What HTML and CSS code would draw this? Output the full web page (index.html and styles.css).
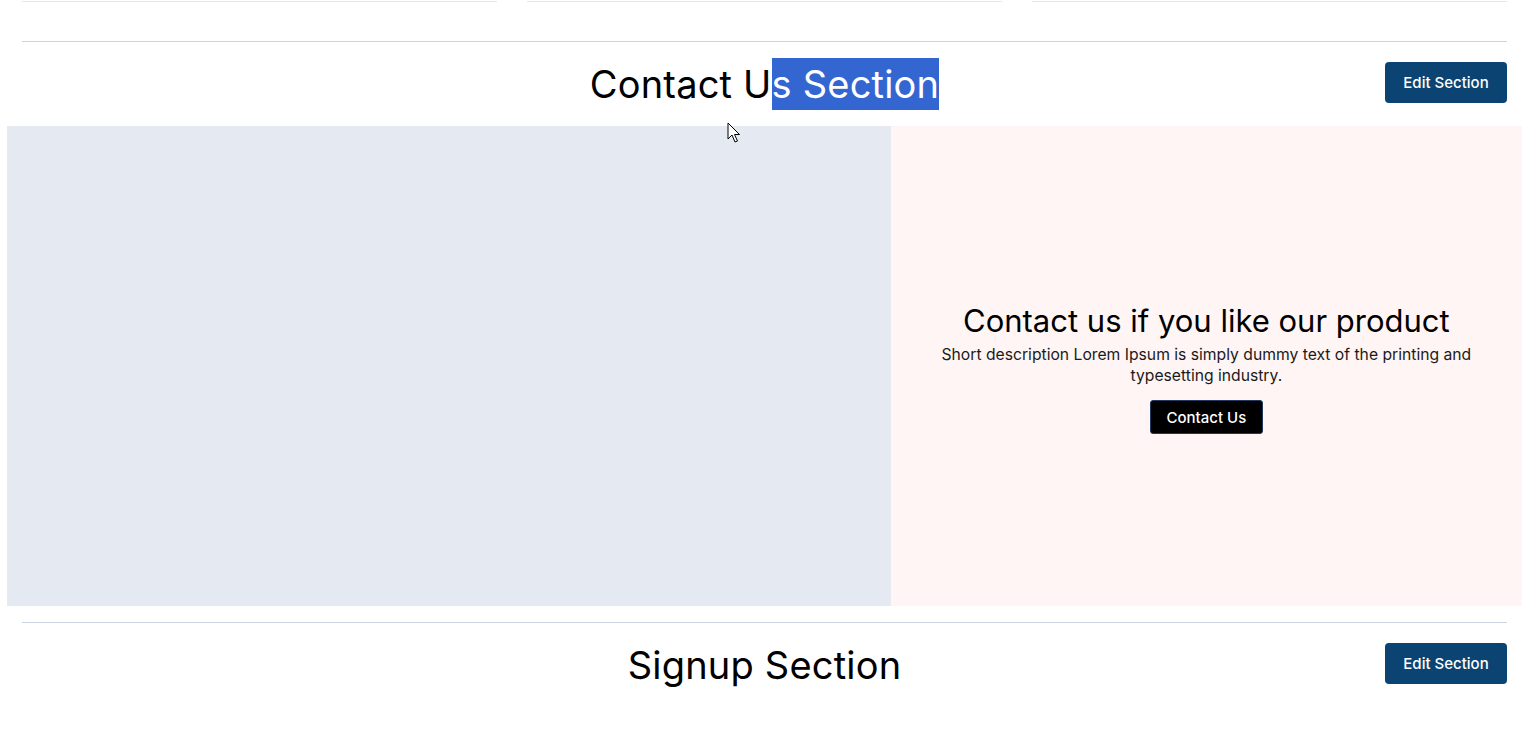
FILE: index.html
```html
<!DOCTYPE html>
<html>
<head>
    <title>Page Builder</title>
    <link rel="stylesheet" href="styles.css">
</head>
<body>
    <div class="page">
        <div class="card-row">
            <div class="card"></div>
            <div class="card"></div>
            <div class="card"></div>
        </div>

        <div class="section-head first">
            <h2 class="section-title">Contact U<span class="selected">s Section</span></h2>
            <button class="edit-btn">Edit Section</button>
        </div>

        <div class="contact">
            <div class="contact-media"></div>
            <div class="contact-body">
                <h3>Contact us if you like our product</h3>
                <p>Short description Lorem Ipsum is simply dummy text of the printing and typesetting industry.</p>
                <button class="contact-btn">Contact Us</button>
            </div>
        </div>

        <div class="section-head">
            <h2 class="section-title">Signup Section</h2>
            <button class="edit-btn">Edit Section</button>
        </div>
    </div>

    <svg class="cursor" width="14" height="22" viewBox="0 0 14 22">
        <path d="M1 1 L1 17 L5 13 L8 20 L10.5 19 L7.5 12.5 L12.5 12.5 Z" fill="#fff" stroke="#000" stroke-width="1" stroke-linejoin="round"/>
    </svg>
</body>
</html>
```

FILE: styles.css
```css
body {
    margin: 0;
    font-family: Inter, "Open Sans", sans-serif;
    background-color: #fff;
    color: #000;
}
.page {
    padding: 0 8px 0 7px;
}
.card-row {
    display: grid;
    grid-template-columns: repeat(3, 1fr);
    gap: 30px;
    margin: 0 15px;
}
.card {
    height: 1px;
    border-bottom: 1px solid #e2e8f0;
}
.section-head {
    display: grid;
    grid-template-columns: 1fr auto 1fr;
    align-items: center;
    margin: 0 15px;
    height: 84px;
    border-top: 1px solid #cbd5e1;
}
.section-head.first {
    margin-top: 39px;
}
.section-title {
    grid-column: 2;
    margin: 0;
    font-size: 38px;
    font-weight: 400;
    line-height: 52px;
    letter-spacing: 0.2px;
}
.selected {
    display: inline-block;
    background-color: #3366d1;
    color: #fff;
}
.edit-btn {
    grid-column: 3;
    justify-self: end;
    margin-top: -3px;
    width: 122px;
    height: 41px;
    background-color: #0b4472;
    color: #fff;
    border: none;
    border-radius: 4px;
    font-family: inherit;
    font-size: 15px;
    font-weight: 500;
}
.contact {
    display: grid;
    grid-template-columns: 7fr 5fr;
    height: 480px;
    margin-bottom: 16px;
}
.contact-media {
    background-color: #e5e9f2;
}
.contact-body {
    background-color: #fff5f5;
    display: flex;
    flex-direction: column;
    align-items: center;
    justify-content: center;
    text-align: center;
    padding: 0 40px;
}
.contact-body h3 {
    margin: 4px 0 4px;
    font-size: 31px;
    font-weight: 400;
    line-height: 38px;
}
.contact-body p {
    margin: 0 0 14px;
    font-size: 15.7px;
    line-height: 21px;
    color: #1a1a1a;
}
.contact-btn {
    background-color: #000;
    color: #fff;
    border: 1px solid #1e3a5f;
    border-radius: 3px;
    height: 34px;
    padding: 0 16px;
    font-family: inherit;
    font-size: 15px;
    font-weight: 500;
}
.cursor {
    position: absolute;
    left: 727px;
    top: 122px;
}
```
